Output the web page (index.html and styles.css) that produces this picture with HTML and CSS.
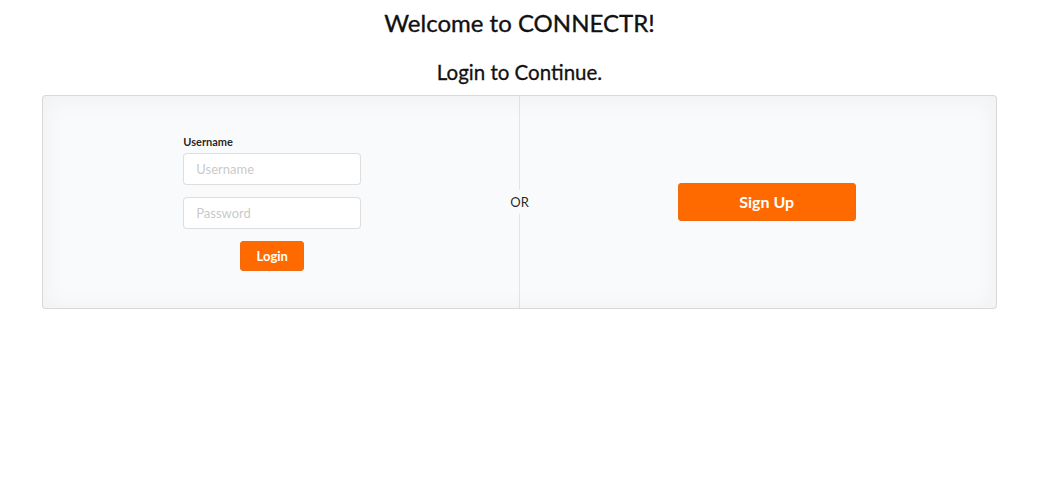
FILE: index.html
```html
<!DOCTYPE html>
<html>
<head>
<meta charset="utf-8">
<link rel="stylesheet" href="styles.css">
</head>
<body>
<div class="page">
  <h1 class="title">Welcome to CONNECTR!</h1>
  <h2 class="subtitle">Login to Continue.</h2>
  <div class="segment">
    <div class="col col-left">
      <form class="form">
        <label class="label">Username</label>
        <input class="input" type="text" placeholder="Username">
        <input class="input" type="password" placeholder="Password">
        <button type="button" class="btn btn-login">Login</button>
      </form>
    </div>
    <div class="divider"><span class="divider-text">OR</span></div>
    <div class="col col-right">
      <button type="button" class="btn btn-signup">Sign Up</button>
    </div>
  </div>
</div>
</body>
</html>
```
FILE: styles.css
```css
html, body {
  margin: 0;
  padding: 0;
  background: #ffffff;
}
body {
  font-family: Lato, "Helvetica Neue", Arial, sans-serif;
  color: rgba(0, 0, 0, 0.87);
}
.page {
  width: 955px;
  margin-left: 42px;
  display: flex;
  flex-direction: column;
  align-items: center;
}
.title {
  margin: 8px 0 0;
  font-size: 24px;
  line-height: 30px;
  font-weight: 400;
  color: #111111;
  -webkit-text-stroke: 0.35px #111111;
}
.subtitle {
  margin: 20px 0 0;
  font-size: 20.5px;
  line-height: 28px;
  font-weight: 400;
  color: #111111;
  -webkit-text-stroke: 0.3px #111111;
}
.segment {
  box-sizing: border-box;
  margin-top: 9px;
  width: 955px;
  height: 214px;
  background: #f9fafb;
  border: 1px solid rgba(34, 36, 38, 0.15);
  border-radius: 4px;
  box-shadow: inset 0 2px 25px 0 rgba(34, 36, 38, 0.05);
  display: flex;
  align-items: stretch;
}
.col {
  flex: 1;
  display: flex;
  align-items: center;
  justify-content: center;
}
.col-left {
  padding-right: 18px;
}
.col-right {
  padding-left: 18px;
}
.form {
  width: 178px;
  display: flex;
  flex-direction: column;
  align-items: center;
  margin-top: 2px;
}
.label {
  align-self: flex-start;
  font-size: 11px;
  font-weight: 700;
  line-height: 14px;
  margin-bottom: 4px;
  color: rgba(0, 0, 0, 0.87);
}
.input {
  box-sizing: border-box;
  width: 178px;
  height: 32px;
  margin: 0 0 12px;
  padding: 0 12px;
  font-family: Lato, "Helvetica Neue", Arial, sans-serif;
  font-size: 13px;
  color: rgba(0, 0, 0, 0.87);
  background: #ffffff;
  border: 1px solid rgba(34, 36, 38, 0.15);
  border-radius: 4px;
  outline: none;
}
.input::placeholder {
  color: rgba(191, 191, 191, 0.87);
}
.btn {
  font-family: Lato, "Helvetica Neue", Arial, sans-serif;
  font-weight: 700;
  color: #ffffff;
  background: #ff6a00;
  border: 1px solid #f26a10;
  border-radius: 3px;
  cursor: pointer;
  padding: 0;
}
.btn-login {
  width: 64px;
  height: 30px;
  font-size: 13px;
}
.btn-signup {
  width: 178px;
  height: 38px;
  font-size: 16px;
  margin-bottom: 1px;
}
.divider {
  width: 0;
  position: relative;
  display: flex;
  flex-direction: column;
  align-items: center;
  justify-content: center;
}
.divider::before,
.divider::after {
  content: "";
  position: absolute;
  left: -1px;
  width: 1px;
  border-left: 1px solid rgba(34, 36, 38, 0.1);
  height: calc(50% - 12px);
}
.divider::before {
  top: 0;
}
.divider::after {
  bottom: 0;
}
.divider-text {
  font-size: 13px;
  line-height: 14px;
  color: rgba(0, 0, 0, 0.87);
  white-space: nowrap;
}
```
